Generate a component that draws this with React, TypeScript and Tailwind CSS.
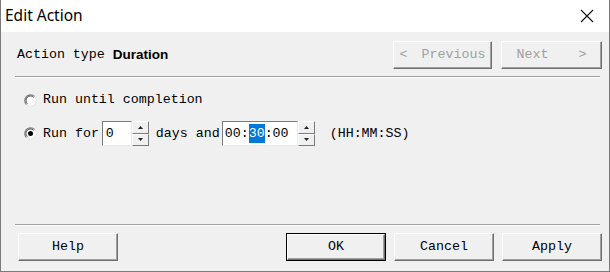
import React from 'react';

const mono = { fontFamily: '"Liberation Mono", "DejaVu Sans Mono", monospace' };

const Btn: React.FC<{ label: React.ReactNode; w?: string; disabled?: boolean; primary?: boolean }> = ({ label, w = 'w-[100px]', disabled, primary }) => (
    <div className={`${w} h-[28px] ${primary ? 'border border-black' : ''}`}>
        <div className="h-full w-full border-t border-l border-white border-r border-b border-r-[#6f6f6f] border-b-[#6f6f6f] bg-[#f0f0f0] flex items-center justify-center shadow-[inset_-1px_-1px_0_#a0a0a0]">
            <span className={`text-[13.3px] ${disabled ? 'text-[#a0a0a0]' : 'text-black'}`} style={mono}>{label}</span>
        </div>
    </div>
);

const Radio: React.FC<{ checked?: boolean }> = ({ checked }) => (
    <svg width="13" height="13" viewBox="0 0 13 13" className="shrink-0">
        <circle cx="6.5" cy="6.5" r="5.8" fill="#ffffff" stroke="#e3e3e3" strokeWidth="1" />
        <path d="M2.4 10.6 A5.8 5.8 0 0 1 10.6 2.4" stroke="#808080" strokeWidth="1.2" fill="none" />
        <path d="M3.3 9.7 A4.5 4.5 0 0 1 9.7 3.3" stroke="#404040" strokeWidth="0.9" fill="none" />
        {checked && <circle cx="6.5" cy="6.5" r="2.5" fill="#000" />}
    </svg>
);

const Spinner: React.FC = () => (
    <div className="flex flex-col w-[17px] h-[25px]">
        {[0, 1].map((i) => (
            <div key={i} className="flex-1 border-t border-l border-white border-r border-b border-r-[#7a7a7a] border-b-[#7a7a7a] bg-[#f0f0f0] flex items-center justify-center">
                <svg width="5" height="3" viewBox="0 0 5 3">
                    {i === 0 ? <path d="M2.5 0 L5 3 L0 3 Z" fill="#222" /> : <path d="M0 0 L5 0 L2.5 3 Z" fill="#222" />}
                </svg>
            </div>
        ))}
    </div>
);

export default function App() {
    return (
        <div className="w-[610px] h-[272px] bg-[#f0f0f0] flex flex-col border-l border-r border-b border-[#7a7a7a] overflow-hidden">
            <div className="h-[32px] bg-white flex items-center justify-between pl-[4px] pr-[15px] shrink-0">
                <span className="text-[15.5px] text-black" style={{ fontFamily: '"Noto Sans", "Open Sans", sans-serif' }}>Edit Action</span>
                <svg width="14" height="14" viewBox="0 0 14 14">
                    <path d="M1 1 L13 13 M13 1 L1 13" stroke="#111" strokeWidth="1.1" />
                </svg>
            </div>

            <div className="flex-1 flex flex-col pl-[14px] pr-[7px]">
                <div className="flex items-center justify-between pt-[9px] h-[37px]">
                    <div className="flex items-center pl-[2px] gap-[8px]">
                        <span className="text-[13.3px] text-black" style={mono}>Action type</span>
                        <span className="text-[13.5px] font-bold text-black" style={{ fontFamily: '"Liberation Sans", Arial, sans-serif' }}>Duration</span>
                    </div>
                    <div className="flex gap-[9px]">
                        <Btn w="w-[99px]" disabled label={<span className="flex gap-[14px]"><span>&lt;</span><span>Previous</span></span>} />
                        <Btn w="w-[101px]" disabled label={<span className="flex gap-[30px]"><span>Next</span><span>&gt;</span></span>} />
                    </div>
                </div>
                <div className="mt-[7px] mr-[2px] border-t border-[#a0a0a0] border-b border-b-white" />

                <div className="pl-[9px] pt-[13px] flex flex-col">
                    <div className="flex items-center gap-[6px] h-[18px]">
                        <Radio />
                        <span className="text-[13.3px] text-black" style={mono}>Run until completion</span>
                    </div>
                    <div className="flex items-center mt-[12px] h-[25px] text-[13.3px] text-black" style={mono}>
                        <Radio checked />
                        <span className="ml-[6px]">Run for</span>
                        <div className="ml-[3px] flex items-center">
                            <div className="w-[30px] h-[25px] bg-white border-t border-l border-[#7a7a7a] border-b border-r border-b-[#e8e8e8] border-r-[#e8e8e8] flex items-center pl-[3px]">0</div>
                            <Spinner />
                        </div>
                        <span className="ml-[7px]">days and</span>
                        <div className="ml-[2px] flex items-center">
                            <div className="w-[76px] h-[25px] bg-white border-t border-l border-[#7a7a7a] border-b border-r border-b-[#e8e8e8] border-r-[#e8e8e8] flex items-center pl-[2px]">
                                00:<span className="bg-[#0078d7] text-white">30</span>:00
                            </div>
                            <Spinner />
                        </div>
                        <span className="ml-[15px]">(HH:MM:SS)</span>
                    </div>
                </div>

                <div className="mt-auto mr-[2px] border-t border-[#a0a0a0] border-b border-b-white" />
                <div className="flex items-center pt-[7px] pb-[10px] pl-[3px]">
                    <Btn label="Help" />
                    <div className="ml-auto flex gap-[8px]">
                        <Btn primary label="OK" />
                        <Btn label="Cancel" />
                        <Btn label="Apply" />
                    </div>
                </div>
            </div>
        </div>
    );
}
